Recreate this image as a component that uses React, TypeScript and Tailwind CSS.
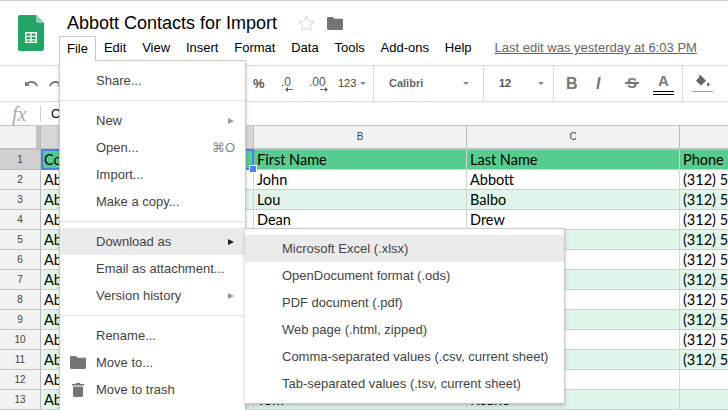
import React from 'react';
import { Star } from 'lucide-react';

const rows = [
  ['Co', 'First Name', 'Last Name', 'Phone'],
  ['Ab', 'John', 'Abbott', '(312) 5'],
  ['Ab', 'Lou', 'Balbo', '(312) 5'],
  ['Ab', 'Dean', 'Drew', '(312) 5'],
  ['Ab', '', '', '(312) 5'],
  ['Ab', '', '', '(312) 5'],
  ['Ab', '', '', '(312) 5'],
  ['Ab', '', '', '(312) 5'],
  ['Ab', '', '', '(312) 5'],
  ['Ab', '', '', '(312) 5'],
  ['Ab', '', '', '(312) 5'],
  ['Ab', '', '', ''],
  ['Ab', 'Tom', 'Keane', ''],
];

const menus = ['Edit', 'View', 'Insert', 'Format', 'Data', 'Tools', 'Add-ons', 'Help'];

const exportItems = [
  'Microsoft Excel (.xlsx)',
  'OpenDocument format (.ods)',
  'PDF document (.pdf)',
  'Web page (.html, zipped)',
  'Comma-separated values (.csv, current sheet)',
  'Tab-separated values (.tsv, current sheet)',
];

const FolderIcon = ({ className }: { className: string }) => (
  <svg viewBox="0 0 16 13" className={className}>
    <path d="M0 1.2C0 .5.5 0 1.2 0H6l1.6 1.8h7.2c.7 0 1.2.5 1.2 1.2v8.800c0 .7-.5 1.200-1.200 1.200H1.200C.5 13 0 12.500 0 11.800z" fill="#757575" />
  </svg>
);

const Arrow = ({ dark }: { dark?: boolean }) => (
  <span className={`absolute right-[11px] top-1/2 -translate-y-1/2 w-0 h-0 border-y-[3.500px] border-y-transparent border-l-[6px] ${dark ? 'border-l-[#222]' : 'border-l-[#999]'}`} />
);

const Caret = () => <span className="w-0 h-0 border-x-[3px] border-x-transparent border-t-[3px] border-t-[#888]" />;

const MenuItem = ({ label, right, arrow, dark, active, icon }: { label: string; right?: string; arrow?: boolean; dark?: boolean; active?: boolean; icon?: React.ReactNode }) => (
  <div className={`relative h-[27px] flex items-center pl-[36px] pr-[10px] text-[13px] text-[#444] ${active ? 'bg-[#ebebeb]' : ''}`}>
    {icon && <span className="absolute left-[10px] top-0 h-full w-[16px] flex items-center justify-center">{icon}</span>}
    <span>{label}</span>
    {right && <span className="ml-auto text-[#888] text-[13px]">{right}</span>}
    {arrow && <Arrow dark={dark} />}
  </div>
);

const Sep = () => <div className="h-px bg-[#e3e3e3] my-[6px]" />;

export default function App() {
  return (
    <div className="relative w-[728px] h-[410px] overflow-hidden bg-white font-['Liberation_Sans',Arial,sans-serif]">
      <div className="h-[66px] border-t border-t-[#d0d0d0] border-b border-b-[#dadada] flex">
        <div className="w-[59px] pl-[18px] pt-[14px] shrink-0">
          <svg viewBox="0 0 26 36" className="w-[26px] h-[36px]">
            <path d="M2 0h16l8 8v26a2 2 0 0 1-2 2H2a2 2 0 0 1-2-2V2a2 2 0 0 1 2-2z" fill="#23a566" />
            <path d="M18 0l8 8h-6a2 2 0 0 1-2-2z" fill="#8ed1b1" />
            <path d="M7 17h12v11H7zm1.500 1.500v2.300h3.800v-2.300zm5.200 0v2.300h3.800v-2.300zm-5.200 3.600v2.100h3.800v-2.100zm5.200 0v2.100h3.800v-2.100zm-5.200 3.400v1.200h3.800v-1.200zm5.200 0v1.200h3.800v-1.200z" fill="#f1f8f4" fillRule="evenodd" />
          </svg>
        </div>
        <div className="flex-1">
          <div className="flex items-center h-[35px] pt-[10px] pl-[8px]">
            <span className="text-[18px] text-black">Abbott Contacts for Import</span>
            <Star className="w-[17px] h-[17px] ml-[21px] text-[#d8d8d8]" strokeWidth={1.500} />
            <FolderIcon className="w-[16px] h-[13px] ml-[12px]" />
          </div>
          <div className="flex items-center h-[24px] text-[13px] text-black pl-[8px]">
            <span className="mr-[9px]">File</span>
            <span className="ml-[7px] flex gap-[15.800px]">
              {menus.map(m => <span key={m}>{m}</span>)}
            </span>
            <span className="ml-[23px] text-[#666] underline">Last edit was yesterday at 6:03 PM</span>
          </div>
        </div>
      </div>

      <div className="h-[36px] border-b border-b-[#dadada] flex items-center text-[#666]">
        <svg viewBox="0 0 16 8" className="w-[16px] h-[8px] ml-[24px] shrink-0">
          <path d="M1 1v5h5L4 4.300c1-.8 2.200-1.300 3.500-1.300 2.200 0 4.200 1.300 5 3.500l1.600-.5C13 2.900 10.400 1 7.500 1 5.700 1 4 1.700 2.700 2.700z" fill="#777" />
        </svg>
        <svg viewBox="0 0 16 8" className="w-[16px] h-[8px] ml-[7px] shrink-0 -scale-x-100">
          <path d="M1 1v5h5L4 4.300c1-.8 2.200-1.300 3.500-1.300 2.200 0 4.200 1.300 5 3.500l1.600-.5C13 2.900 10.400 1 7.500 1 5.700 1 4 1.700 2.700 2.700z" fill="#777" />
        </svg>
        <span className="ml-[190px] w-[28px] text-[13px] font-bold text-[#555]">%</span>
        <span className="relative w-[28px] text-[12px] text-[#555] leading-none -mt-[4px]">
          .0
          <span className="absolute left-[4px] top-[11px] w-[8px] h-[3px] text-[#666]">
            <svg viewBox="0 0 8 5" className="w-[8px] h-[5px]"><path d="M0 2.500L3 0v2h5v1H3v2z" fill="#666" /></svg>
          </span>
        </span>
        <span className="relative w-[29px] text-[12px] text-[#555] leading-none -mt-[4px]">
          .00
          <span className="absolute left-[11px] top-[11px] w-[8px] h-[3px]">
            <svg viewBox="0 0 8 5" className="w-[8px] h-[5px]"><path d="M8 2.500L5 0v2H0v1h5v2z" fill="#666" /></svg>
          </span>
        </span>
        <span className="w-[35px] flex items-center gap-[4px] text-[11px] text-[#444]">123<Caret /></span>
        <span className="h-[36px] w-px bg-[#dadada]" />
        <span className="w-[109px] pl-[15px] pr-[14px] flex items-center justify-between text-[11px] font-bold text-[#666]">Calibri<Caret /></span>
        <span className="h-[36px] w-px bg-[#dadada]" />
        <span className="w-[69px] pl-[15px] pr-[9px] flex items-center justify-between text-[11px] font-bold text-[#555]">12<Caret /></span>
        <span className="h-[36px] w-px bg-[#dadada]" />
        <span className="w-[30px] pl-[12px] text-[16px] font-bold text-[#777]">B</span>
        <span className="w-[30px] pl-[12px] text-[16px] font-bold italic text-[#777]">I</span>
        <span className="relative w-[29px] pl-[13px] text-[15px] font-bold text-[#777]">
          S
          <span className="absolute left-[11px] top-[10px] w-[14px] h-[1.500px] bg-[#777]" />
        </span>
        <span className="relative w-[39px] pl-[15px] text-[15px] font-bold text-[#777] leading-none -mt-[6px]">
          A
          <span className="absolute left-[10px] top-[18px] w-[21px] h-[4px] border-y border-y-black" />
        </span>
        <span className="h-[36px] w-px bg-[#dadada]" />
        <span className="relative ml-[9px] w-[21px] h-[22px]">
          <svg viewBox="0 0 18 16" className="absolute left-[3px] top-[2px] w-[16px] h-[14px]">
            <path d="M6 0l1.200 1.200L12.500 6.500 7.500 11.500a1 1 0 0 1-1.400 0L1.500 7a1 1 0 0 1 0-1.400L5 2.200 3.700 1z" fill="#666" />
            <path d="M15 8c1 1.500 1.500 2.300 1.500 3a1.500 1.500 0 0 1-3 0c0-.7.5-1.500 1.500-3z" fill="#666" />
          </svg>
          <span className="absolute left-0 bottom-[3px] w-[21px] h-[1px] bg-[#57cc8e]" />
        </span>
      </div>

      <div className="h-[24px] flex items-center border-b border-b-[#c4c4c4]">
        <span className="w-[40px] pl-[12px] font-['Liberation_Serif',serif] italic text-[20px] leading-none text-[#aaa]">fx</span>
        <span className="h-[16px] w-px bg-[#d0d0d0]" />
        <span className="pl-[10px] text-[13px] text-black">C</span>
      </div>

      <div className="grid grid-cols-[41px_213px_213px_213px_48px] font-['Lato','Open_Sans',sans-serif]">
        <div className="h-[24px] bg-[#f2f2f2] border-r border-b-2 border-r-[#bbb] border-b-[#c0c0c0] pl-[36px]"><div className="w-[4px] h-full bg-[#c4c4c4]" /></div>
        <div className="h-[24px] bg-[#d8d8d8] border-r border-b-2 border-r-[#bbb] border-b-[#c0c0c0]" />
        {['B', 'C', ''].map((c, i) => (
          <div key={i} className={`h-[24px] pb-[2px] bg-[#f2f2f2] border-b-2 border-b-[#c0c0c0] flex items-center justify-center font-['Liberation_Sans',sans-serif] text-[10px] text-[#444] ${i < 2 ? 'border-r border-r-[#bbb]' : ''}`}>{c}</div>
        ))}
        {rows.map((row, i) => {
          const bg = i === 0 ? 'bg-[#57cc8e]' : i % 2 === 1 ? 'bg-white' : 'bg-[#e1f6ea]';
          return (
            <React.Fragment key={i}>
              <div className={`h-[20px] border-r border-r-[#bbb] border-b flex items-center justify-center font-['Liberation_Sans',sans-serif] text-[10px] text-[#444] ${i === 0 ? 'bg-[#d0d0d0] border-b-[#bbb]' : 'bg-[#f2f2f2] border-b-[#c4c4c4]'}`}>{i + 1}</div>
              {row.map((cell, j) => (
                <div key={j} className={`h-[20px] pl-[3px] border-b border-b-[#c8d2cc] flex items-center text-[14.500px] whitespace-nowrap text-black overflow-hidden ${bg} ${j < 3 ? 'border-r border-r-[#d0d8d3]' : ''}`}>{cell}</div>
              ))}
            </React.Fragment>
          );
        })}
      </div>

      {/* selected cell outline, only the handle shows past the menu */}
      <div className="absolute left-[41px] top-[149px] w-[213px] h-[21px] border-2 border-[#4a80f0]" />
      <div className="absolute left-[249px] top-[165px] w-[6px] h-[6px] bg-[#4a80f0] border border-white box-content" />

      {/* File tab */}
      <div className="absolute left-[59px] top-[36px] w-[37px] h-[25px] z-20 bg-white border border-b-0 border-[#c8c8c8] flex items-center justify-center text-[13px] text-black">File</div>

      {/* File menu */}
      <div className="absolute left-[59px] top-[60px] w-[187px] h-[360px] z-10 bg-white border border-[#c8c8c8] shadow-[0_2px_4px_rgba(0,0,0,0.2)] pt-[6px]">
        <MenuItem label="Share..." />
        <Sep />
        <MenuItem label="New" arrow />
        <MenuItem label="Open..." right="⌘O" />
        <MenuItem label="Import..." />
        <MenuItem label="Make a copy..." />
        <Sep />
        <MenuItem label="Download as" arrow dark active />
        <MenuItem label="Email as attachment..." />
        <MenuItem label="Version history" arrow />
        <Sep />
        <MenuItem label="Rename..." />
        <MenuItem label="Move to..." icon={<FolderIcon className="w-[16px] h-[13px]" />} />
        <MenuItem
          label="Move to trash"
          icon={
            <svg viewBox="0 0 12 14" className="w-[12px] h-[14px]">
              <path d="M4 0h4l.7 1H12v1.500H0V1h3.300zM1 3.500h10V12.500A1.500 1.500 0 0 1 9.500 14h-7A1.500 1.500 0 0 1 1 12.500z" fill="#757575" />
            </svg>
          }
        />
      </div>

      {/* Download as submenu */}
      <div className="absolute left-[245px] top-[228px] w-[320px] h-[176px] z-20 bg-white border border-[#c8c8c8] border-l-0 shadow-[0_2px_4px_rgba(0,0,0,0.2)] pt-[6px]">
        {exportItems.map((item, i) => (
          <div key={item} className={`h-[27px] flex items-center pl-[37px] text-[13px] text-[#444] ${i === 0 ? 'bg-[#ebebeb]' : ''}`}>{item}</div>
        ))}
      </div>
    </div>
  );
}
